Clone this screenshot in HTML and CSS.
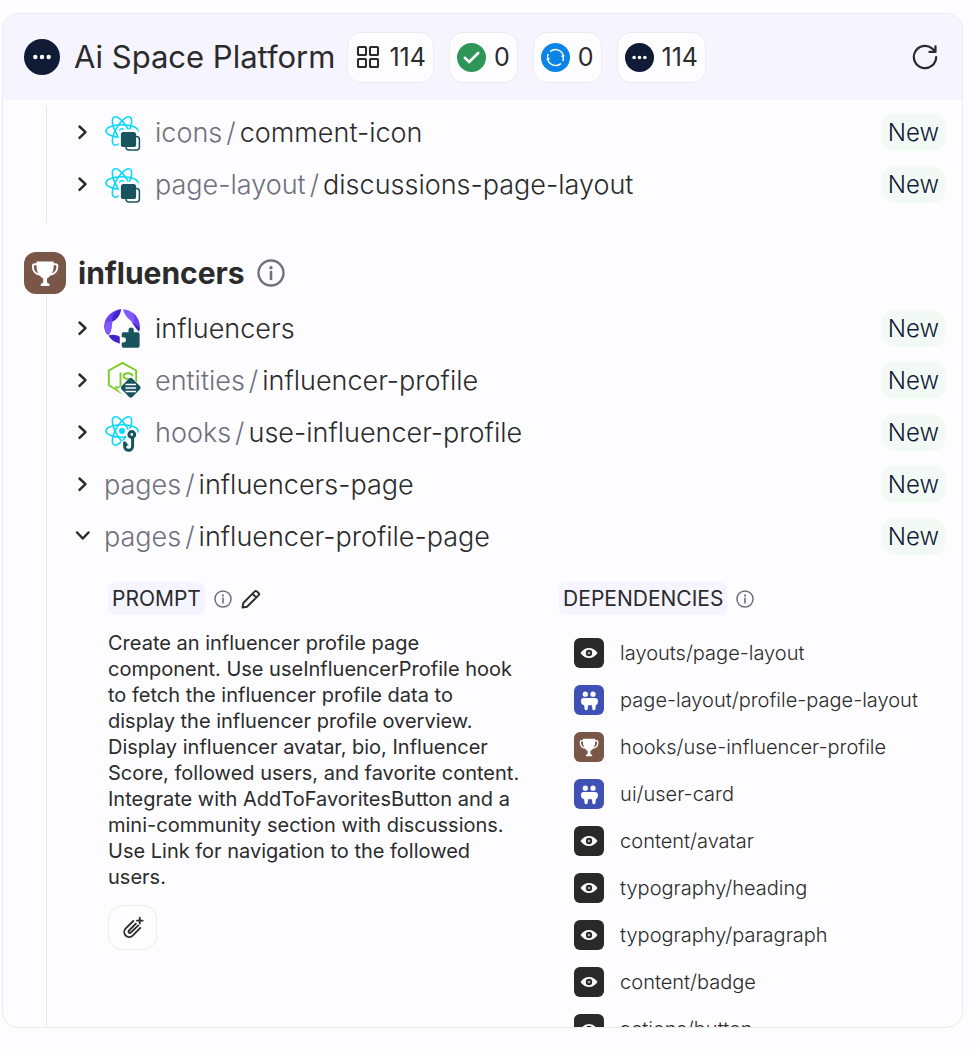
FILE: index.html
```
<!DOCTYPE html>
<html lang="en">
<head>
<meta charset="utf-8">
<meta name="viewport" content="width=device-width, initial-scale=1">
<title>Ai Space Platform</title>
<link rel="stylesheet" href="styles.css">
</head>
<body>
<svg class="sprite" aria-hidden="true">
  <symbol id="pending" viewBox="0 0 36 36"><circle cx="18" cy="18" r="18" fill="#101b36"/><g fill="#fff"><circle cx="11.3" cy="18" r="2.2"/><circle cx="18" cy="18" r="2.2"/><circle cx="24.7" cy="18" r="2.2"/></g></symbol>
  <symbol id="info" viewBox="0 0 28 28"><circle cx="14" cy="14" r="12.5" fill="none" stroke="currentColor" stroke-width="2.3"/><circle cx="14" cy="8.7" r="1.7" fill="currentColor"/><path d="M14 13v7" stroke="currentColor" stroke-width="2.6" stroke-linecap="round"/></symbol>
  <symbol id="chevron" viewBox="0 0 24 24"><path d="M8.5 6.500l6 5.700-6 5.700" fill="none" stroke="currentColor" stroke-width="2.5" stroke-linecap="round" stroke-linejoin="round"/></symbol>
  <symbol id="atom" viewBox="0 0 38 40"><g fill="none" stroke="#0ad7fa" stroke-width="1.6"><ellipse cx="18" cy="19" rx="16" ry="6.2"/><ellipse cx="18" cy="19" rx="16" ry="6.2" transform="rotate(60 18 19)"/><ellipse cx="18" cy="19" rx="16" ry="6.2" transform="rotate(120 18 19)"/></g><circle cx="18" cy="19" r="3" fill="#0ad7fa"/></symbol>
  <symbol id="component" viewBox="0 0 38 40"><use href="#atom"/><rect x="14.600" y="17.600" width="20" height="20" rx="4" fill="#fdfdff"/><rect x="22" y="24.500" width="13.400" height="13.400" rx="3" fill="#fdfdff" stroke="#18535e" stroke-width="1.500"/><rect x="16.900" y="19.900" width="15.200" height="15.200" rx="2.600" fill="#18535e"/></symbol>
  <symbol id="hook" viewBox="0 0 38 40"><use href="#atom"/><g fill="none" stroke-linecap="round" stroke-linejoin="round"><g stroke="#fdfdff" stroke-width="6.500"><circle cx="27.800" cy="22.500" r="3"/><path d="M27.800 26v8.500a3.800 3.800 0 0 1-7.600 0v-3"/></g><g stroke="#18535e" stroke-width="3"><circle cx="27.800" cy="22.500" r="2.900"/><path d="M28.600 26v8.300a4 4 0 0 1-8 0v-3.500l1.600 2"/></g></g></symbol>
  <symbol id="aspect" viewBox="0 0 38 40"><path d="M17 1.2C9 1.8 1 8 .2 17.500c0 4 1.700 8.800 4.300 9.300C7.500 25 7 19 8.500 14 10 9 16 6 17 1.200z" fill="#6b3ff5"/><path d="M17 1.200C12 2 7.500 6 8.200 13.500 13 12 17 6 17 1.200z" fill="#3d27c9"/><path d="M.2 17.500c0 4 1.700 8.800 4.300 9.300C7.500 25 8 18 8 13.500 4 13 1.500 14.500.2 17.500z" fill="#8159ff"/><path d="M19.200 1.200C20 7 24 10 27.500 13.500c3 3 3.500 7.500 8 8.500C37 12 30 2 19.200 1.200z" fill="#8159ff"/><path d="M27.500 4.200c3 3 3.500 6.500 2.500 12 1.500 3 3 5 5.500 5.800C37 14 33 7 27.500 4.200z" fill="#6b3ff5"/><path d="M27.500 14c2.500 1.500 6 4 8.200 5.500l-.4 5z" fill="#3d27c9"/><path d="M4.500 27.500c4-1.500 10-.5 12.500 2.500v5.800c-5-.8-10-3.500-12.500-8.300z" fill="#3d27c9"/><path d="M15.800 25.200q-.6-1.400.9-2h5.300q.5-4.800 5.200-4.800t5.200 4.800h5V42H15.800z" fill="#fdfdff"/><path d="M19.500 24.300h5v-2.200a2.600 2.600 0 0 1 5.300 0v2.200h4q1.800 0 1.800 1.800V38q0 1.800-1.800 1.800H19.500q-1.800 0-1.800-1.800v-3.600h1.700a2.600 2.600 0 0 0 0-5.200h-1.700v-3.100q0-1.800 1.800-1.800z" fill="#18535e"/></symbol>
  <symbol id="entity" viewBox="0 0 38 40"><path d="M18.500 2.800l13.700 7.700v14.800L18.500 33.500 4.800 25.300V10.500z" fill="none" stroke="#7bcb25" stroke-width="1.900" stroke-linejoin="round"/><path d="M16.500 12.500v12.500q0 3.300-3.500 2.500l-1.600-.9M28.500 16.300q-.5-3-4.500-3-4.500 0-4.500 2.800 0 2.500 4.500 2.900 5 .5 5 3" fill="none" stroke="#7bcb25" stroke-width="1.900"/><path d="M26 17.500l1.500-.5 10.500 10v6L26 42l-12.500-12.500z" fill="#fdfdff"/><rect x="19" y="20" width="15.500" height="15.500" rx="2.600" transform="rotate(45 26.750 27.750)" fill="#18535e"/><path d="M21.500 24.500h10.400M21.500 28h10.400M21.500 31.500h10.400" stroke="#fff" stroke-width="1.500"/></symbol>
  <symbol id="trophy" viewBox="0 0 42 42"><path d="M12.500 9.500h17.200v4.500c0 6.500-3.500 11-6.700 12.400v3.600q.2 1.500 2.400 1.700V34h-8.600v-2.300q2.200-.2 2.400-1.700v-3.600c-3.200-1.400-6.700-5.900-6.700-12.400z" fill="#fff"/><path d="M13.500 12.200h-2.700q-2 0-2 2.100c0 4.300 2.600 7.900 7.200 8.300M28.700 12.200h2.700q2 0 2 2.100c0 4.300-2.600 7.900-7.200 8.300" fill="none" stroke="#fff" stroke-width="1.900"/></symbol>
  <symbol id="eye" viewBox="0 0 30 30"><path d="M6.500 15Q10 10 15 10t8.500 5Q20 20 15 20t-8.500-5z" fill="#fff"/><circle cx="15" cy="15" r="3.200" fill="#292929"/><circle cx="15" cy="15" r="1.300" fill="#aaa"/></symbol>
  <symbol id="people" viewBox="0 0 30 30"><g fill="#fff"><circle cx="11.300" cy="9.200" r="2.600"/><circle cx="19" cy="9.200" r="2.600"/><path d="M9.500 13h11q3.500 0 3.500 3.200 0 3.300-2.200 4l-.3 3.600q-.2 1.500-1.600 1.500-1.500 0-1.600-1.500l-.3-3.500h-4l-.3 3.500q-.1 1.500-1.600 1.500-1.400 0-1.600-1.500l-.3-3.600Q7 19.500 7 16.200 7 13 9.500 13z"/></g></symbol>
</svg>

<main class="panel">
  <header class="topbar">
    <svg class="state-icon"><use href="#pending"/></svg>
    <h1 class="title">Ai Space Platform</h1>
    <div class="chips">
      <span class="chip"><svg class="chip-grid" viewBox="0 0 26 26" fill="none" stroke="#2b2b2b" stroke-width="2.100"><rect x="3" y="3" width="8" height="8" rx=".8"/><rect x="15" y="3" width="8" height="8" rx=".8"/><rect x="3" y="15" width="8" height="8" rx=".8"/><rect x="15" y="15" width="8" height="8" rx=".8"/></svg>114</span>
      <span class="chip"><svg class="chip-icon" viewBox="0 0 29 29"><circle cx="14.500" cy="14.500" r="14.500" fill="#2e9659"/><path d="M7.800 14.800l4.400 4.200 9-9" fill="none" stroke="#fff" stroke-width="2.600" stroke-linecap="round"/></svg>0</span>
      <span class="chip"><svg class="chip-icon" viewBox="0 0 29 29"><circle cx="14.500" cy="14.500" r="14.500" fill="#0b84e8"/><g fill="none" stroke="#fff" stroke-width="1.500" stroke-linecap="round"><path d="M9.600 8.200a8 8 0 0 1 12.800 5.300M19.400 20.800A8 8 0 0 1 6.600 15.500M7 11.500l-.4 2M22 17.500l.4-2"/></g><path d="M19.800 12.800l2.500 2.700 1.400-3.300zM9.200 16.200l-2.500-2.700-1.400 3.300z" fill="#fff"/></svg>0</span>
      <span class="chip"><svg class="chip-icon"><use href="#pending"/></svg>114</span>
    </div>
    <button class="icon-button refresh" aria-label="Refresh"><svg viewBox="0 0 28 28" fill="none" stroke="currentColor" stroke-width="2.400" stroke-linecap="round" stroke-linejoin="round"><path d="M26 14A12 12 0 1 1 21.500 4.600L25 8M25.300 2.500v6h-6.500"/></svg></button>
  </header>

  <section class="group">
    <div class="rows">
      <div class="row"><button class="toggle" aria-label="Expand comment-icon"><svg><use href="#chevron"/></svg></button><svg class="kind"><use href="#component"/></svg><span class="name"><span class="scope">icons</span><span class="slash">/</span>comment-icon</span><span class="badge">New</span></div>
      <div class="row"><button class="toggle" aria-label="Expand discussions-page-layout"><svg><use href="#chevron"/></svg></button><svg class="kind"><use href="#component"/></svg><span class="name"><span class="scope">page-layout</span><span class="slash">/</span>discussions-page-layout</span><span class="badge">New</span></div>
    </div>
  </section>

  <section class="group group-next">
    <div class="group-head">
      <span class="tile brown group-tile"><svg><use href="#trophy"/></svg></span>
      <h2 class="group-title">influencers</h2>
      <button class="icon-button info-large" aria-label="About influencers"><svg><use href="#info"/></svg></button>
    </div>
    <div class="rows rows-next">
      <div class="row"><button class="toggle" aria-label="Expand influencers"><svg><use href="#chevron"/></svg></button><svg class="kind"><use href="#aspect"/></svg><span class="name">influencers</span><span class="badge">New</span></div>
      <div class="row"><button class="toggle" aria-label="Expand influencer-profile"><svg><use href="#chevron"/></svg></button><svg class="kind"><use href="#entity"/></svg><span class="name"><span class="scope">entities</span><span class="slash">/</span>influencer-profile</span><span class="badge">New</span></div>
      <div class="row"><button class="toggle" aria-label="Expand use-influencer-profile"><svg><use href="#chevron"/></svg></button><svg class="kind"><use href="#hook"/></svg><span class="name"><span class="scope">hooks</span><span class="slash">/</span>use-influencer-profile</span><span class="badge">New</span></div>
      <div class="row"><button class="toggle" aria-label="Expand influencers-page"><svg><use href="#chevron"/></svg></button><span class="name"><span class="scope">pages</span><span class="slash">/</span>influencers-page</span><span class="badge">New</span></div>
      <div class="row"><button class="toggle open" aria-label="Collapse influencer-profile-page" aria-expanded="true"><svg><use href="#chevron"/></svg></button><span class="name"><span class="scope">pages</span><span class="slash">/</span>influencer-profile-page</span><span class="badge">New</span></div>

      <div class="detail">
        <div class="prompt">
          <div class="label-row">
            <h3 class="label">PROMPT</h3>
            <button class="icon-button info-small" aria-label="About the prompt"><svg><use href="#info"/></svg></button>
            <button class="icon-button edit" aria-label="Edit prompt"><svg viewBox="0 0 20 20" fill="none" stroke="currentColor" stroke-width="1.900" stroke-linejoin="round"><path d="M1.500 18.500l.8-4.500L13.800 2.400q1-1 2 0l1.900 1.800q1 1 0 2L6 17.700zM11.500 4.800l3.900 3.800"/></svg></button>
          </div>
          <p class="prompt-text">Create an influencer profile page component. Use useInfluencerProfile hook to fetch the influencer profile data to display the influencer profile overview. Display influencer avatar, bio, Influencer Score, followed users, and favorite content. Integrate with AddToFavoritesButton and a mini-community section with discussions. Use Link for navigation to the followed users.</p>
          <button class="attach" aria-label="Attach a file"><svg viewBox="0 0 24 24" fill="none" stroke="currentColor" stroke-width="1.900" stroke-linecap="round" stroke-linejoin="round"><path d="M12.800 5.200L5 13a5 5 0 0 0 7.200 7.500l8-8M15.500 8l-7.300 7.400a1.400 1.400 0 0 0 2 2L18 9.800"/><path d="M19.600 1.800v6M16.600 4.800h6"/></svg></button>
        </div>
        <div class="dependencies">
          <div class="label-row">
            <h3 class="label">DEPENDENCIES</h3>
            <button class="icon-button info-small" aria-label="About dependencies"><svg><use href="#info"/></svg></button>
          </div>
          <ul class="deps">
            <li><a class="dep" href="#"><span class="tile dark"><svg><use href="#eye"/></svg></span>layouts/page-layout</a></li>
            <li><a class="dep" href="#"><span class="tile blue"><svg><use href="#people"/></svg></span>page-layout/profile-page-layout</a></li>
            <li><a class="dep" href="#"><span class="tile brown"><svg><use href="#trophy"/></svg></span>hooks/use-influencer-profile</a></li>
            <li><a class="dep" href="#"><span class="tile blue"><svg><use href="#people"/></svg></span>ui/user-card</a></li>
            <li><a class="dep" href="#"><span class="tile dark"><svg><use href="#eye"/></svg></span>content/avatar</a></li>
            <li><a class="dep" href="#"><span class="tile dark"><svg><use href="#eye"/></svg></span>typography/heading</a></li>
            <li><a class="dep" href="#"><span class="tile dark"><svg><use href="#eye"/></svg></span>typography/paragraph</a></li>
            <li><a class="dep" href="#"><span class="tile dark"><svg><use href="#eye"/></svg></span>content/badge</a></li>
            <li><a class="dep" href="#"><span class="tile dark"><svg><use href="#eye"/></svg></span>actions/button</a></li>
          </ul>
        </div>
      </div>
    </div>
  </section>
</main>
</body>
</html>
```
FILE: styles.css
```
* { box-sizing: border-box; }

body {
  margin: 0;
  height: 100vh;
  display: flex;
  padding: 13px 15px 22px 2px;
  background: #fdfdff;
  color: #2b2b2b;
  font-family: Inter, "Liberation Sans", sans-serif;
}

h1, h2, h3, p, ul { margin: 0; padding: 0; font-weight: 400; }
ul { list-style: none; }
svg { display: block; flex: none; }
button { font: inherit; color: inherit; padding: 0; border: 0; background: none; cursor: pointer; flex: none; }
button svg { width: 100%; height: 100%; }
.sprite { position: absolute; width: 0; height: 0; }

.panel {
  flex: 1;
  min-width: 0;
  overflow: hidden;
  border: 1px solid #ebebed;
  border-radius: 16px;
}

.topbar {
  display: flex;
  align-items: center;
  height: 86px;
  padding: 0 24px 0 21px;
  background: #f6f4fe;
}
.state-icon { width: 36px; height: 36px; }
.title { margin: 0 12px 0 14px; font-size: 31px; line-height: 40px; white-space: nowrap; }
.chips { display: flex; gap: 15px; }
.chip {
  display: flex;
  align-items: center;
  gap: 8px;
  height: 51px;
  padding: 0 7px;
  border: 1px solid #ececee;
  border-radius: 14px;
  background: #fdfdff;
  font-size: 25px;
}
.chip-icon { width: 29px; height: 29px; }
.chip-grid { width: 26px; height: 26px; }
.refresh { width: 26px; height: 26px; margin-left: auto; }

.rows { margin: 6px 0 0 43px; padding-bottom: 13px; border-left: 1px solid #e8e8ea; }
.rows-next { margin-top: 1px; padding-top: 7px; }
.group-next { margin-top: 29px; }
.row { display: flex; align-items: center; height: 52px; padding: 0 16px 0 24px; }
.toggle { width: 24px; height: 24px; margin-right: 9px; }
.open svg { transform: rotate(90deg); }
.kind { width: 38px; height: 40px; margin-right: 13px; }
.name { font-size: 27px; font-weight: 300; white-space: nowrap; }
.scope, .slash { color: #70707a; }
.slash { margin: 0 4px; }
.badge {
  margin-left: auto;
  padding: 0 7px;
  border-radius: 14px;
  background: #f3faf6;
  color: #101b36;
  font-size: 24px;
  font-weight: 300;
  line-height: 37px;
}

.group-head { display: flex; align-items: center; padding-left: 21px; height: 42px; }
.tile { display: flex; flex: none; width: 30px; height: 30px; border-radius: 6px; }
.tile svg { width: 100%; height: 100%; }
.group-tile { width: 42px; height: 42px; border-radius: 12px; }
.brown { background: #7a5648; }
.blue { background: #4051b5; }
.dark { background: #292929; }
.group-title { margin: 0 12px; font-size: 30px; font-weight: 700; }
.info-large { width: 28px; height: 28px; color: #70707a; }
.info-small { width: 18px; height: 18px; color: #70707a; }

.detail { display: grid; grid-template-columns: 13fr 12fr; gap: 32px; padding: 20px 16px 0 61px; }
.label-row { display: flex; align-items: center; gap: 9px; }
.label { padding: 0 4px; border-radius: 6px; background: #f6f4fe; font-size: 21px; line-height: 33px; }
.edit { width: 20px; height: 20px; }
.prompt-text { margin: 15px 0; padding-right: 4px; font-size: 20px; line-height: 26px; }
.attach { width: 49px; height: 45px; padding: 10px 12px; border: 1px solid #ececee; border-radius: 14px; }
.deps { display: grid; gap: 17px; padding: 23px 0 0 15px; }
.dep { display: flex; align-items: center; gap: 16px; color: inherit; font-size: 20px; font-weight: 300; line-height: 30px; text-decoration: none; white-space: nowrap; }
```
